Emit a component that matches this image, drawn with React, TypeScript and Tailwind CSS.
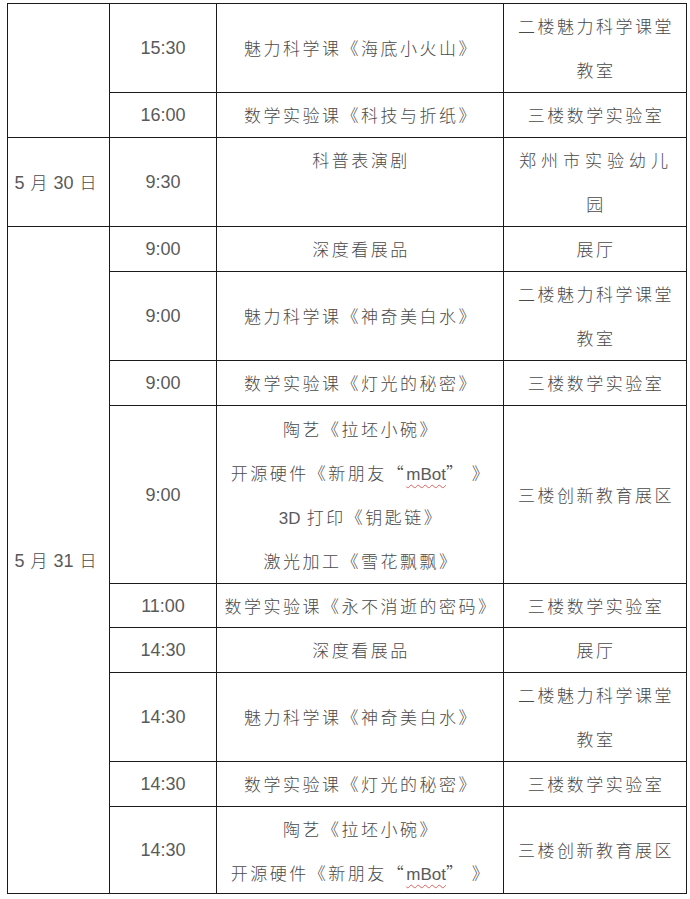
import React from "react";

const cn = "font-['Noto_Sans_CJK_SC',sans-serif] font-light text-[17px] tracking-[2.5px] text-[#4a4a4a]";
const num = "font-['Liberation_Sans',sans-serif] text-[18px] tracking-normal text-[#5a5a5a]";
const cell = "border border-[#1a1a1a] p-0 text-center align-middle";

function L({ children }: { children: React.ReactNode }) {
  return <div className="h-[44px] leading-[44px] whitespace-nowrap">{children}</div>;
}

function S({ children }: { children: React.ReactNode }) {
  return <div className="h-[36px] leading-[36px] whitespace-nowrap">{children}</div>;
}

function Time({ t }: { t: string }) {
  return (
    <td className={`${cell} ${num}`}>
      <S>{t}</S>
    </td>
  );
}

function C({ children, top }: { children: React.ReactNode; top?: boolean }) {
  return (
    <td className={`${cell} ${cn} pl-[2px] ${top ? "align-top" : ""}`}>{children}</td>
  );
}

const lat = "font-['Liberation_Sans',sans-serif] tracking-normal text-[17px] text-[#5a5a5a]";

function MBot() {
  return (
    <L>
      开源硬件《新朋友“
      <span className={`${lat} underline decoration-wavy decoration-[#e06060] decoration-1 underline-offset-[4px]`}>
        mBot
      </span>
      ” 》
    </L>
  );
}

function DateCell({ d, rowSpan }: { d: string; rowSpan?: number }) {
  return (
    <td rowSpan={rowSpan} className={`${cell} ${cn} tracking-normal pr-[6px]`}>
      <S>
        <span className={num}>5</span>
        <span className="mx-[6px]">月</span>
        <span className={num}>{d}</span>
        <span className="ml-[6px]">日</span>
      </S>
    </td>
  );
}

function Room2() {
  return (
    <C>
      <L>二楼魅力科学课堂</L>
      <L>教室</L>
    </C>
  );
}

export default function App() {
  return (
    <div className="w-[690px] h-[899px] bg-white pt-[3px] pl-[7px] overflow-hidden">
      <table className="border-collapse table-fixed w-[679px]">
        <colgroup>
          <col className="w-[102px]" />
          <col className="w-[107px]" />
          <col className="w-[287px]" />
          <col className="w-[183px]" />
        </colgroup>
        <tbody>
          <tr className="h-[89px]">
            <td rowSpan={2} className={cell}></td>
            <Time t="15:30" />
            <C><S>魅力科学课《海底小火山》</S></C>
            <Room2 />
          </tr>
          <tr className="h-[45px]">
            <Time t="16:00" />
            <C><S>数学实验课《科技与折纸》</S></C>
            <C><S>三楼数学实验室</S></C>
          </tr>
          <tr className="h-[89px]">
            <DateCell d="30" />
            <Time t="9:30" />
            <C top><L>科普表演剧</L></C>
            <C>
              <L><span className="tracking-[5px]">郑州市实验幼儿</span></L>
              <L>园</L>
            </C>
          </tr>
          <tr className="h-[45px]">
            <DateCell d="31" rowSpan={9} />
            <Time t="9:00" />
            <C><S>深度看展品</S></C>
            <C><S>展厅</S></C>
          </tr>
          <tr className="h-[89px]">
            <Time t="9:00" />
            <C><S>魅力科学课《神奇美白水》</S></C>
            <Room2 />
          </tr>
          <tr className="h-[45px]">
            <Time t="9:00" />
            <C><S>数学实验课《灯光的秘密》</S></C>
            <C><S>三楼数学实验室</S></C>
          </tr>
          <tr className="h-[178px]">
            <Time t="9:00" />
            <C>
              <L>陶艺《拉坯小碗》</L>
              <MBot />
              <L>
                <span className={lat}>3D</span> 打印《钥匙链》
              </L>
              <L>激光加工《雪花飘飘》</L>
            </C>
            <C><S>三楼创新教育展区</S></C>
          </tr>
          <tr className="h-[44px]">
            <Time t="11:00" />
            <C><S>数学实验课《永不消逝的密码》</S></C>
            <C><S>三楼数学实验室</S></C>
          </tr>
          <tr className="h-[45px]">
            <Time t="14:30" />
            <C><S>深度看展品</S></C>
            <C><S>展厅</S></C>
          </tr>
          <tr className="h-[89px]">
            <Time t="14:30" />
            <C><S>魅力科学课《神奇美白水》</S></C>
            <Room2 />
          </tr>
          <tr className="h-[45px]">
            <Time t="14:30" />
            <C><S>数学实验课《灯光的秘密》</S></C>
            <C><S>三楼数学实验室</S></C>
          </tr>
          <tr className="h-[87px]">
            <Time t="14:30" />
            <C>
              <L>陶艺《拉坯小碗》</L>
              <div className="h-[42px] leading-[44px] whitespace-nowrap">
                开源硬件《新朋友“
                <span className={`${lat} underline decoration-wavy decoration-[#e06060] decoration-1 underline-offset-[4px]`}>
                  mBot
                </span>
                ” 》
              </div>
            </C>
            <C><S>三楼创新教育展区</S></C>
          </tr>
        </tbody>
      </table>
    </div>
  );
}
